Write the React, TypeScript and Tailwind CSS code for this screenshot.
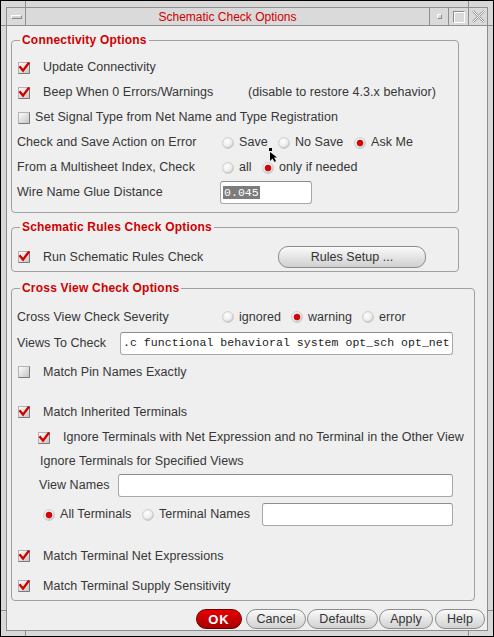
import React from "react";

function CheckBox({ checked = false }: { checked?: boolean }) {
  return (
    <svg width="12" height="12" viewBox="0 0 12 12" className="shrink-0">
      <defs>
        <linearGradient id="cbg" x1="0" y1="0" x2="1" y2="1">
          <stop offset="0" stopColor="#ffffff" />
          <stop offset="1" stopColor="#c2c2c2" />
        </linearGradient>
      </defs>
      <rect x="0.5" y="0.5" width="11" height="11" fill="url(#cbg)" stroke="#b4b4b4" />
      <path d="M11.5 0.5V11.5H0.5" fill="none" stroke="#7a7a7a" />
      {checked && (
        <path d="M2.2 5.2 L5 8.6 L10.4 1.4" fill="none" stroke="#d40000" strokeWidth="2.4" strokeLinecap="square" />
      )}
    </svg>
  );
}

function Radio({ on = false }: { on?: boolean }) {
  return (
    <svg width="12" height="12" viewBox="0 0 12 12" className="shrink-0">
      <defs>
        <radialGradient id="rbg" cx="0.4" cy="0.35" r="0.75">
          <stop offset="0" stopColor="#ffffff" />
          <stop offset="0.6" stopColor="#ececec" />
          <stop offset="1" stopColor="#b0b0b0" />
        </radialGradient>
      </defs>
      <circle cx="6" cy="6" r="5.4" fill="url(#rbg)" stroke="#c4c4c4" strokeWidth="0.8" />
      {on && <circle cx="6" cy="6" r="3" fill="#e00000" stroke="#a00000" strokeWidth="0.6" />}
    </svg>
  );
}

function Option({ on = false, label, w }: { on?: boolean; label: string; w?: string }) {
  return (
    <div className={`flex items-center ${w ?? ""}`}>
      <Radio on={on} />
      <span className="ml-[5px]">{label}</span>
    </div>
  );
}

function Field({ w, value, selected = false }: { w: string; value?: string; selected?: boolean }) {
  return (
    <div
      className={`${w} h-[23px] bg-white border border-[#a8a8a8] border-t-[#8c8c8c] rounded-[3px] flex items-center px-[2px] overflow-hidden whitespace-nowrap font-['Liberation_Mono',monospace] text-[11.5px] text-[#222]`}
    >
      {value && (selected ? <span className="bg-[#7c7c7c] text-white px-px leading-[13px]">{value}</span> : <span>{value}</span>)}
    </div>
  );
}

function PillButton({ w, label }: { w: string; label: string }) {
  return (
    <button
      className={`${w} h-[20px] rounded-[10px] border border-[#8c8c8c] bg-gradient-to-b from-[#fafafa] to-[#d2d2d2] text-[12.5px] text-[#333] flex items-center justify-center`}
    >
      {label}
    </button>
  );
}

function Group({ title, w, className, children }: { title: string; w: string; className?: string; children: React.ReactNode }) {
  return (
    <fieldset className={`ml-[4px] ${w} border border-[#a0a0a0] rounded-[4px] ${className ?? ""}`}>
      <legend className="ml-[8px] px-[2px] text-[12px] font-bold leading-[16px] tracking-[0.2px] text-[#d00000]">
        {title}
      </legend>
      {children}
    </fieldset>
  );
}

export default function App() {
  return (
    <div className="w-[494px] h-[637px] bg-black p-px font-['Liberation_Sans',Arial,sans-serif]">
      <div className="relative h-full bg-[#d8d8d8] pt-[6px] px-[5px] pb-[5px]">
        {/* frame corner marks */}
        <div className="absolute left-[24px] top-0 w-px h-[6px] bg-[#8e8e8e]" />
        <div className="absolute left-[467px] top-0 w-px h-[6px] bg-[#8e8e8e]" />
        <div className="absolute left-[24px] bottom-0 w-px h-[5px] bg-[#8e8e8e]" />
        <div className="absolute left-[467px] bottom-0 w-px h-[5px] bg-[#8e8e8e]" />
        <div className="absolute left-0 top-[24px] w-[5px] h-px bg-[#8e8e8e]" />
        <div className="absolute right-0 top-[24px] w-[5px] h-px bg-[#8e8e8e]" />
        <div className="absolute left-0 top-[609px] w-[5px] h-px bg-[#8e8e8e]" />
        <div className="absolute right-0 top-[609px] w-[5px] h-px bg-[#8e8e8e]" />

        {/* mouse pointer */}
        <svg className="absolute left-[267px] top-[146px]" width="10" height="16" viewBox="0 0 10 16">
          <rect x="1" y="1" width="3" height="3" fill="#000" />
          <path d="M2 5 L2 14 L4.5 11.5 L6.5 15 L8 14 L6 10.5 L9 10.5 Z" fill="#000" />
        </svg>

        <div className="h-full border border-[#8e8e8e] flex flex-col bg-[#efefef]">
          {/* title bar */}
          <div className="h-[18px] flex bg-[#dadada] border-b border-[#8e8e8e]">
            <div className="w-[19px] border-r border-[#8e8e8e] flex items-center justify-center">
              <div className="w-[11px] h-[4px] bg-[#d4d4d4] border border-t-white border-l-white border-b-[#8a8a8a] border-r-[#8a8a8a]" />
            </div>
            <div className="flex-1 flex items-center justify-center text-[12px] text-[#d00000]">
              Schematic Check Options
            </div>
            <div className="w-[19px] border-l border-[#8e8e8e] flex items-center justify-center">
              <div className="w-[5px] h-[5px] border border-t-white border-l-white border-b-[#8a8a8a] border-r-[#8a8a8a]" />
            </div>
            <div className="w-[20px] border-l border-[#8e8e8e] flex items-center justify-center">
              <div className="w-[12px] h-[12px] border border-t-[#8a8a8a] border-l-[#8a8a8a] border-b-white border-r-white shadow-[inset_1px_1px_0_#fff]" />
            </div>
            <div className="w-[19px] border-l border-[#8e8e8e] flex items-center justify-center">
              <svg width="15" height="15" viewBox="0 0 15 15">
                <path d="M2 2 L13 13 M13 2 L2 13" stroke="#9a9a9a" strokeWidth="2.4" />
                <path d="M2 2 L13 13 M13 2 L2 13" stroke="#ffffff" strokeWidth="1" />
              </svg>
            </div>
          </div>

          {/* content */}
          <div className="flex-1 flex flex-col text-[12.5px] tracking-[0.05px] text-[#363636] whitespace-nowrap">
            <Group title="Connectivity Options" w="w-[448px]" className="mt-[6px]">
              <div className="pt-[7px] pb-[7px]">
                <div className="h-[25px] flex items-center pl-[6px]">
                  <CheckBox checked />
                  <span className="ml-[13px]">Update Connectivity</span>
                </div>
                <div className="h-[25px] flex items-center pl-[6px]">
                  <CheckBox checked />
                  <span className="ml-[13px] w-[205px]">Beep When 0 Errors/Warnings</span>
                  <span>(disable to restore 4.3.x behavior)</span>
                </div>
                <div className="h-[25px] flex items-center pl-[6px]">
                  <CheckBox />
                  <span className="ml-[5px]">Set Signal Type from Net Name and Type Registration</span>
                </div>
                <div className="h-[25px] flex items-center pl-[5px]">
                  <span className="w-[205px]">Check and Save Action on Error</span>
                  <Option label="Save" w="w-[56px]" />
                  <Option label="No Save" w="w-[76px]" />
                  <Option label="Ask Me" on />
                </div>
                <div className="h-[25px] flex items-center pl-[5px]">
                  <span className="w-[205px]">From a Multisheet Index, Check</span>
                  <Option label="all" w="w-[40px]" />
                  <Option label="only if needed" on />
                </div>
                <div className="h-[25px] flex items-center pl-[5px]">
                  <span className="w-[203px]">Wire Name Glue Distance</span>
                  <Field w="w-[92px]" value="0.045" selected />
                </div>
              </div>
            </Group>

            <Group title="Schematic Rules Check Options" w="w-[448px]" className="mt-[6px]">
              <div className="pt-[9px] pb-px">
                <div className="h-[26px] flex items-center pl-[6px]">
                  <CheckBox checked />
                  <span className="ml-[13px] w-[235px]">Run Schematic Rules Check</span>
                  <button className="w-[148px] h-[22px] rounded-[10px] border border-[#8c8c8c] bg-gradient-to-b from-[#fafafa] to-[#d0d0d0] text-[12.5px] text-[#333]">
                    Rules Setup ...
                  </button>
                </div>
              </div>
            </Group>

            <Group title="Cross View Check Options" w="w-[464px]" className="mt-[8px]">
              <div className="pt-[9px] pb-px">
                <div className="h-[24px] flex items-center pl-[5px]">
                  <span className="w-[205px]">Cross View Check Severity</span>
                  <Option label="ignored" w="w-[69px]" />
                  <Option label="warning" w="w-[71px]" on />
                  <Option label="error" />
                </div>
                <div className="h-[28px] flex items-center pl-[5px]">
                  <span className="w-[103px]">Views To Check</span>
                  <Field w="w-[333px]" value=".c functional behavioral system opt_sch opt_net" />
                </div>
                <div className="h-[30px] flex items-center pl-[6px]">
                  <CheckBox />
                  <span className="ml-[13px]">Match Pin Names Exactly</span>
                </div>
                <div className="h-[30px] mt-[10px] flex items-center pl-[6px]">
                  <CheckBox checked />
                  <span className="ml-[13px]">Match Inherited Terminals</span>
                </div>
                <div className="h-[21px] flex items-center pl-[26px]">
                  <CheckBox checked />
                  <span className="ml-[13px]">Ignore Terminals with Net Expression and no Terminal in the Other View</span>
                </div>
                <div className="h-[26px] flex items-center pl-[28px]">
                  <span>Ignore Terminals for Specified Views</span>
                </div>
                <div className="h-[23px] flex items-center pl-[27px]">
                  <span className="w-[79px]">View Names</span>
                  <Field w="w-[335px]" />
                </div>
                <div className="h-[23px] mt-[6px] flex items-center pl-[31px]">
                  <Option label="All Terminals" w="w-[99px]" on />
                  <Option label="Terminal Names" w="w-[120px]" />
                  <Field w="w-[191px]" />
                </div>
                <div className="h-[26px] mt-[17px] flex items-center pl-[6px]">
                  <CheckBox checked />
                  <span className="ml-[13px]">Match Terminal Net Expressions</span>
                </div>
                <div className="h-[26px] mt-[4px] flex items-center pl-[6px]">
                  <CheckBox checked />
                  <span className="ml-[13px]">Match Terminal Supply Sensitivity</span>
                </div>
              </div>
            </Group>

            {/* bottom buttons */}
            <div className="mt-[8px] h-[20px] flex justify-end pr-[2px]">
              <button className="w-[46px] h-[20px] rounded-[10px] border border-[#6a0000] bg-gradient-to-b from-[#e80000] to-[#a80000] text-white font-bold text-[13px] tracking-[1px]">
                OK
              </button>
              <div className="ml-[4px]"><PillButton w="w-[60px]" label="Cancel" /></div>
              <div className="ml-px"><PillButton w="w-[71px]" label="Defaults" /></div>
              <div className="ml-px"><PillButton w="w-[54px]" label="Apply" /></div>
              <div className="ml-[2px]"><PillButton w="w-[50px]" label="Help" /></div>
            </div>
          </div>
        </div>
      </div>
    </div>
  );
}
